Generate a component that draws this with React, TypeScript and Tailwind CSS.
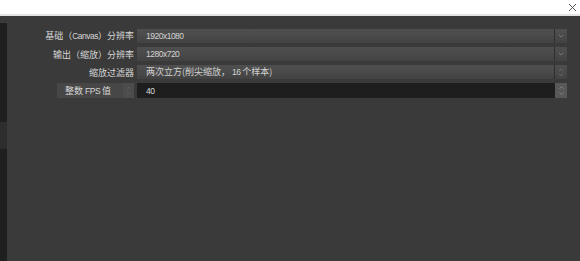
import { ChevronDown, ChevronUp } from 'lucide-react';
import type { ReactNode } from 'react';

const font = { fontFamily: '"Noto Sans CJK SC", "Liberation Sans", sans-serif' };

// ascii runs look narrower than the cjk glyphs in the original
function A({ children }: { children: ReactNode }) {
  return <span className="font-['Liberation_Sans'] text-[8.5px] tracking-[-0.5px]">{children}</span>;
}

function Combo({ children, updown }: { children: ReactNode; updown?: boolean }) {
  return (
    <div className="flex h-[14px] items-stretch bg-gradient-to-b from-[#4f4f4f] via-[#4a4a4a] to-[#424242]">
      <div className="flex flex-1 items-center border-r border-[#2e2e2e] pl-[9px] text-[9px] leading-none text-[#d2d2d2]">
        <span>{children}</span>
      </div>
      <div className="flex w-[12px] flex-col items-center justify-center text-[#8a8a8a]">
        {updown ? (
          <>
            <ChevronUp size={6} strokeWidth={2} className="-mb-[1px]" />
            <ChevronDown size={6} strokeWidth={2} />
          </>
        ) : (
          <ChevronDown size={8} strokeWidth={2} />
        )}
      </div>
    </div>
  );
}

function Label({ children }: { children: ReactNode }) {
  return (
    <div className="flex h-[14px] items-center justify-end text-[9px] leading-none text-[#d6d6d6]">
      <span>{children}</span>
    </div>
  );
}

export default function App() {
  return (
    <div className="flex h-[261px] w-[580px] flex-col overflow-hidden bg-[#3a3a3a]" style={font}>
      <div className="flex h-[16px] items-center justify-end border-b-2 border-[#e4e4e4] bg-white pr-[3px]">
        <svg width="9" height="9" viewBox="0 0 9 9" className="text-[#555]">
          <path d="M1 1L8 8M8 1L1 8" stroke="currentColor" strokeWidth="1" />
        </svg>
      </div>
      <div className="flex flex-1">
        <div className="mt-[7px] flex w-[7px] flex-col bg-[#1f1f1f]">
          <div className="h-[99px]" />
          <div className="h-[27px] bg-[#2d2d2d]" />
        </div>
        <div className="flex-1 pt-[13px] pr-[13px]">
          <div className="grid grid-cols-[127px_1fr] gap-x-[3px] gap-y-[4px]">
            <Label>
              基础（<A>Canvas</A>）分辨率
            </Label>
            <Combo>
              <A>1920x1080</A>
            </Combo>
            <Label>输出（缩放）分辨率</Label>
            <Combo>
              <A>1280x720</A>
            </Combo>
            <Label>缩放过滤器</Label>
            <Combo updown>
              两次立方(削尖缩放，<A>&nbsp;16&nbsp;</A>个样本)
            </Combo>
            <div className="flex justify-end">
              <div className="flex h-[15px] w-[77px] items-stretch bg-[#474747]">
                <div className="flex flex-1 items-center pl-[8px] text-[9px] leading-none text-[#d6d6d6]">
                  <span>
                    整数&nbsp;<A>FPS</A>&nbsp;值
                  </span>
                </div>
                <div className="flex w-[11px] flex-col items-center justify-center bg-[#4c4c4c] text-[#6e6e6e]">
                  <ChevronUp size={6} strokeWidth={2} className="-mb-[1px]" />
                  <ChevronDown size={6} strokeWidth={2} />
                </div>
              </div>
            </div>
            <div className="flex h-[15px] items-stretch">
              <div className="flex flex-1 items-center bg-[#1e1e1e] pl-[9px] text-[9px] leading-none text-[#dcdcdc]">
                <span>
                  <A>40</A>
                </span>
              </div>
              <div className="flex w-[12px] flex-col items-center justify-center bg-[#585858] text-[#a0a0a0]">
                <ChevronUp size={7} strokeWidth={2} className="-mb-[1px]" />
                <ChevronDown size={7} strokeWidth={2} />
              </div>
            </div>
          </div>
        </div>
      </div>
    </div>
  );
}
